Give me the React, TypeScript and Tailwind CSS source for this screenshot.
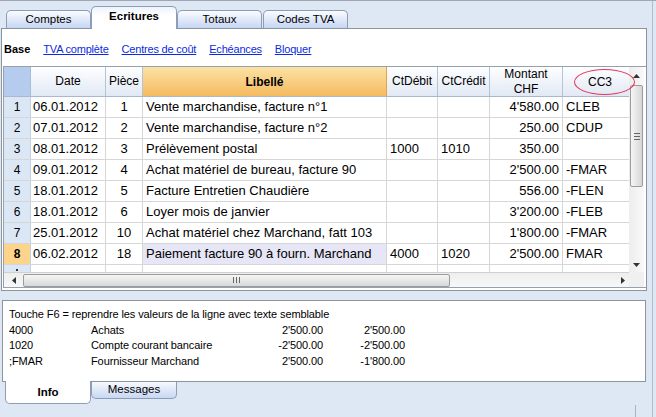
import React from 'react';

// Banana-style "Ecritures" ledger window, fixed 656x417.

type Row = [string, string, string, string, string, string, string, string];

const rows: Row[] = [
  ['1', '06.01.2012', '1', 'Vente marchandise, facture n°1', '', '', "4'580.00", 'CLEB'],
  ['2', '07.01.2012', '2', 'Vente marchandise, facture n°2', '', '', '250.00', 'CDUP'],
  ['3', '08.01.2012', '3', 'Prélèvement postal', '1000', '1010', '350.00', ''],
  ['4', '09.01.2012', '4', 'Achat matériel de bureau, facture 90', '', '', "2'500.00", '-FMAR'],
  ['5', '18.01.2012', '5', 'Facture Entretien Chaudière', '', '', '556.00', '-FLEN'],
  ['6', '18.01.2012', '6', 'Loyer mois de janvier', '', '', "3'200.00", '-FLEB'],
  ['7', '25.01.2012', '10', 'Achat matériel chez Marchand, fatt 103', '', '', "1'800.00", '-FMAR'],
  ['8', '06.02.2012', '18', 'Paiement facture 90 à fourn. Marchand', '4000', '1020', "2'500.00", 'FMAR'],
];

const info = [
  ['4000', 'Achats', "2'500.00", "2'500.00"],
  ['1020', 'Compte courant bancaire', "-2'500.00", "-2'500.00"],
  [';FMAR', 'Fournisseur Marchand', "2'500.00", "-1'800.00"],
];

const ui = "font-['Liberation_Sans',Arial,sans-serif]";

const Tab = ({ label }: { label: string }) => (
  <div className="flex h-[18px] w-[85px] items-center justify-center rounded-t-[5px] border border-b-0 border-[#8c9db6] bg-gradient-to-b from-[#fbfcff] to-[#c6d6f3] text-[11.5px] text-black">
    {label}
  </div>
);

const HeadCell = ({ w, children, bold }: { w: string; children: React.ReactNode; bold?: boolean }) => (
  <div
    className={`${w} flex shrink-0 flex-col items-center justify-center border-r border-[#b3c3d9] bg-gradient-to-b from-[#fdfeff] to-[#e2e9f4] text-center text-[12px] leading-[15px] ${bold ? 'font-bold' : ''}`}
  >
    {children}
  </div>
);

const GridRow = ({ r, sel }: { r: Row; sel?: boolean }) => (
  <div className="flex h-[21px] border-b border-[#d6d6d6] text-[13px]">
    <div
      className={`flex w-[27px] shrink-0 items-center justify-center border-r border-[#c2d0e3] text-[12px] ${sel ? 'bg-[#fcd48b] font-bold' : 'bg-[#dce7f5]'}`}
    >
      {r[0]}
    </div>
    <div className="flex w-[75px] shrink-0 items-center border-r border-[#d6d6d6] pl-[2px]">{r[1]}</div>
    <div className="flex w-[37px] shrink-0 items-center justify-center border-r border-[#d6d6d6]">{r[2]}</div>
    <div className={`flex w-[244px] shrink-0 items-center whitespace-nowrap border-r border-[#d6d6d6] pl-[3px] ${sel ? 'bg-[#e6e6f6]' : ''}`}>
      {r[3]}
    </div>
    <div className="flex w-[51px] shrink-0 items-center border-r border-[#d6d6d6] pl-[3px]">{r[4]}</div>
    <div className="flex w-[52px] shrink-0 items-center border-r border-[#d6d6d6] pl-[3px]">{r[5]}</div>
    <div className="flex w-[73px] shrink-0 items-center justify-end border-r border-[#d6d6d6] pr-[3px]">{r[6]}</div>
    <div className="flex w-[66px] shrink-0 items-center pl-[3px]">{r[7]}</div>
  </div>
);

export default function App() {
  return (
    <div className={`relative flex h-[417px] w-[656px] overflow-hidden border-t border-[#9ea7b3] bg-[#dee8f5] text-black ${ui}`}>
      <div className="flex w-[652px] flex-col">
        {/* top tabs */}
        <div className="flex h-[27px] items-end pl-[6px]">
          <Tab label="Comptes" />
          <div className="relative top-[1px] z-10 flex h-[23px] w-[86px] items-center justify-center rounded-t-[5px] border border-b-0 border-[#8c9db6] bg-gradient-to-b from-[#eef3fc] to-white to-40% pb-[2px] text-[11.5px] font-bold">
            Ecritures
          </div>
          <Tab label="Totaux" />
          <div className="ml-[1px]">
            <Tab label="Codes TVA" />
          </div>
        </div>

        {/* main panel */}
        <div className="ml-[1px] flex h-[263px] w-[646px] flex-col border border-[#8d949c] bg-white">
          <div className="flex h-[37px] gap-[13px] px-[2px] pt-[12px] text-[11px] tracking-[-0.2px]">
            <span className="font-bold tracking-normal">Base</span>
            <span className="text-[#0b2be0] underline">TVA complète</span>
            <span className="text-[#0b2be0] underline">Centres de coût</span>
            <span className="text-[#0b2be0] underline">Echéances</span>
            <span className="text-[#0b2be0] underline">Bloquer</span>
          </div>

          <div className="ml-[1px] flex border-y border-l border-[#97a1ad]">
            <div className="flex w-[625px] flex-col">
              {/* header */}
              <div className="flex h-[30px] border-b border-[#a7b8d0]">
                <div className="w-[27px] shrink-0 border-r border-[#a9bcd8] bg-[#b5ccee]" />
                <HeadCell w="w-[75px]">Date</HeadCell>
                <HeadCell w="w-[37px]">Pièce</HeadCell>
                <div className="flex w-[244px] shrink-0 items-center justify-center border-r border-[#e3a34a] bg-gradient-to-b from-[#fbe2a4] to-[#f5ba5e] text-[12px] font-bold">
                  Libellé
                </div>
                <HeadCell w="w-[51px]">CtDébit</HeadCell>
                <HeadCell w="w-[52px]">CtCrédit</HeadCell>
                <HeadCell w="w-[73px]">
                  <span>Montant</span>
                  <span>CHF</span>
                </HeadCell>
                <div className="flex w-[66px] shrink-0 items-center justify-center bg-gradient-to-b from-[#fdfeff] to-[#e2e9f4] pl-[8px] text-[12px]">
                  CC3
                </div>
              </div>
              {rows.map((r, i) => (
                <GridRow key={r[0]} r={r} sel={i === 7} />
              ))}
              {/* partial row: only the top of the next row number shows */}
              <div className="flex h-[7px] overflow-hidden">
                <div className="flex w-[27px] shrink-0 justify-center border-r border-[#c2d0e3] bg-[#dce7f5] pt-[4px]">
                  <div className="h-[2px] w-[2px] bg-[#333]" />
                </div>
                <div className="w-[75px] shrink-0 border-r border-[#d6d6d6]" />
                <div className="w-[37px] shrink-0 border-r border-[#d6d6d6]" />
                <div className="w-[244px] shrink-0 border-r border-[#d6d6d6]" />
                <div className="w-[51px] shrink-0 border-r border-[#d6d6d6]" />
                <div className="w-[52px] shrink-0 border-r border-[#d6d6d6]" />
                <div className="w-[73px] shrink-0 border-r border-[#d6d6d6]" />
              </div>
              {/* horizontal scrollbar */}
              <div className="flex h-[15px] items-center border-t border-[#d0d0d0] bg-gradient-to-b from-[#eeeeee] to-[#f8f8f8]">
                <div className="flex w-[19px] justify-center">
                  <svg width="4" height="7" viewBox="0 0 4 7"><path d="M4 0 L0 3.5 L4 7 Z" fill="#333" /></svg>
                </div>
                <div className="flex h-[13px] w-[427px] items-center justify-center rounded-[2px] border border-[#9c9c9c] bg-gradient-to-b from-[#f6f6f6] to-[#d8d8d8]">
                  <svg width="7" height="6" viewBox="0 0 7 6">
                    <path d="M0.5 0V6M3.5 0V6M6.5 0V6" stroke="#666" />
                  </svg>
                </div>
                <div className="flex-1" />
                <div className="flex w-[12px] justify-center">
                  <svg width="4" height="7" viewBox="0 0 4 7"><path d="M0 0 L4 3.5 L0 7 Z" fill="#333" /></svg>
                </div>
              </div>
            </div>

            {/* vertical scrollbar */}
            <div className="flex w-[15px] flex-col">
              <div className="flex flex-1 flex-col items-center bg-gradient-to-r from-[#ededed] to-[#f9f9f9]">
                <div className="flex h-[18px] items-center">
                  <svg width="7" height="4" viewBox="0 0 7 4"><path d="M0 4 L3.5 0 L7 4 Z" fill="#333" /></svg>
                </div>
                <div className="flex h-[102px] w-[13px] items-center justify-center rounded-[2px] border border-[#9c9c9c] bg-gradient-to-r from-[#f6f6f6] to-[#d6d6d6]">
                  <svg width="6" height="7" viewBox="0 0 6 7">
                    <path d="M0 0.5H6M0 3.5H6M0 6.5H6" stroke="#666" />
                  </svg>
                </div>
                <div className="flex-1" />
                <div className="flex h-[14px] items-center">
                  <svg width="7" height="4" viewBox="0 0 7 4"><path d="M0 0 L3.5 4 L7 0 Z" fill="#333" /></svg>
                </div>
              </div>
              <div className="h-[15px] bg-[#f0f0f0]" />
            </div>
          </div>
        </div>

        {/* info panel */}
        <div className="ml-[2px] mt-[9px] flex h-[82px] w-[644px] flex-col border border-[#8d949c] bg-white pl-[6px] pt-[6px] text-[11px] leading-[15.5px] tracking-[-0.1px]">
          <div>Touche F6 = reprendre les valeurs de la ligne avec texte semblable</div>
          {info.map((l) => (
            <div key={l[0]} className="flex">
              <span className="w-[82px]">{l[0]}</span>
              <span className="w-[172px]">{l[1]}</span>
              <span className="w-[60px] text-right">{l[2]}</span>
              <span className="w-[82px] text-right">{l[3]}</span>
            </div>
          ))}
        </div>

        {/* bottom tabs */}
        <div className="flex flex-1 items-start pl-[5px]">
          <div className="relative -top-[1px] z-10 flex h-[23px] w-[86px] items-center justify-center rounded-b-[5px] border border-t-0 border-[#8c9db6] bg-white pt-[2px] text-[11.5px] font-bold">
            Info
          </div>
          <div className="flex h-[17px] w-[86px] items-center justify-center rounded-b-[5px] border border-t-0 border-[#8c9db6] bg-gradient-to-b from-[#f6f9fe] to-[#c8d7f3] text-[11.5px]">
            Messages
          </div>
          <div className="ml-auto mr-[16px] h-[12px] w-[1px] self-end bg-[#a9b4c2]" />
        </div>
      </div>
      <div className="w-[1px] bg-[#b2bcc8]" />
      <div className="flex-1" />

      {/* red annotation ellipse around CC3 */}
      <div className="absolute left-[574px] top-[68px] h-[26px] w-[61px] rounded-[50%] border border-[#e6385a]" />
    </div>
  );
}
